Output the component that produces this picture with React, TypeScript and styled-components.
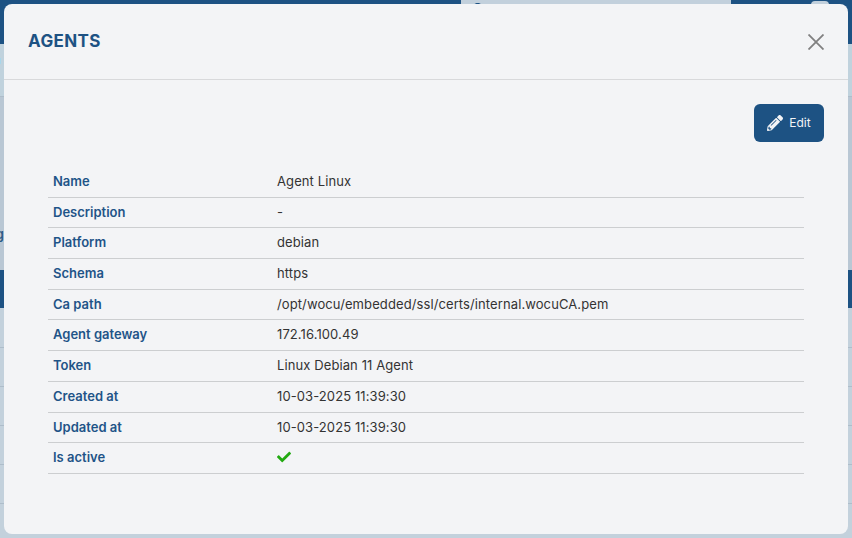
import styled, { createGlobalStyle } from "styled-components";
import { FaCheck, FaPencilAlt, FaSearch } from "react-icons/fa";

const blue = "#1d5283";

const GlobalStyle = createGlobalStyle`
  html, body {
    margin: 0;
    padding: 0;
    height: 100%;
    overflow: hidden;
    background: #c3d1dc;
    font-family: Inter, "Liberation Sans", sans-serif;
  }
`;

const Page = styled.div`
  height: 538px;
  overflow: hidden;
`;

const TopBar = styled.header`
  height: 44px;
  background: ${blue};
  display: flex;
`;

const Search = styled.div`
  width: 270px;
  height: 30px;
  box-sizing: border-box;
  margin-left: 461px;
  padding: 3px 0 0 11px;
  background: #c2d0dc;
  color: ${blue};
  font-size: 14px;
`;

const UserBox = styled.div`
  width: 18px;
  height: 30px;
  margin: 1px 0 0 80px;
  background: #c2d0dc;
  border-radius: 4px;
`;

const SubBar = styled.div`
  height: 52px;
  background: #c0d2dd;
  border-bottom: 1px solid #aebdca;
`;

const Marker = styled.div`
  width: 1px;
  height: 6px;
  position: relative;
  top: 14px;
  background: #a8d6ea;
`;

const Content = styled.div`
  height: 173px;
  background: #b9c7d4;
  display: flex;
  align-items: flex-start;
`;

const Clipped = styled.div`
  width: 4px;
  height: 20px;
  margin-top: 129px;
  overflow: hidden;
  display: flex;
  justify-content: flex-end;
  font-size: 13px;
  font-weight: 600;
  color: #2c5a85;
`;

const TableHead = styled.div`
  height: 38px;
  background: ${blue};
`;

const PageRows = styled.div`
  padding-top: 1px;
`;

const PageRow = styled.div`
  height: 38px;
  border-bottom: 1px solid #aebdca;
`;

const Modal = styled.section`
  position: fixed;
  top: 4px;
  left: 4px;
  right: 4px;
  bottom: 4px;
  background: #f3f4f6;
  border-radius: 8px;
  display: flex;
  flex-direction: column;
`;

const ModalHeader = styled.div`
  height: 76px;
  box-sizing: border-box;
  border-bottom: 1px solid #d8d9db;
  padding: 0 24px;
  display: flex;
  align-items: center;
  justify-content: space-between;
`;

const Title = styled.h2`
  margin: 0 0 2px;
  font-size: 17px;
  font-weight: 700;
  letter-spacing: 0.4px;
  color: ${blue};
`;

const CloseButton = styled.button`
  width: 16px;
  height: 16px;
  padding: 0;
  border: none;
  background: none;
  display: flex;
`;

const ModalBody = styled.div`
  padding: 24px 24px 0 44px;
`;

const Actions = styled.div`
  display: flex;
  justify-content: flex-end;
  margin-bottom: 24px;
`;

const EditButton = styled.button`
  width: 70px;
  height: 38px;
  border: none;
  border-radius: 6px;
  background: ${blue};
  color: #f3f4f6;
  font-family: inherit;
  font-size: 12px;
  display: flex;
  align-items: center;
  justify-content: center;
  gap: 6px;
  padding: 0 0 1px;

  svg {
    font-size: 16px;
  }
`;

const Table = styled.table`
  width: 756px;
  border-collapse: collapse;
  table-layout: fixed;
  font-size: 13px;
`;

const Row = styled.tr`
  height: 31px;
  border-bottom: 1px solid #ccced0;

  &:nth-child(2),
  &:nth-child(5),
  &:nth-child(9) {
    height: 30px;
  }
`;

const Label = styled.th`
  width: 219px;
  padding: 0 5px 1px;
  text-align: left;
  font-weight: 600;
  color: #1f5488;
`;

const Value = styled.td`
  padding: 0 0 1px;
  color: #333;
  letter-spacing: 0.1px;
`;

const ActiveIcon = styled(FaCheck)`
  display: block;
  font-size: 14px;
  color: #22aa11;
`;

const rows = [
  ["Name", "Agent Linux"],
  ["Description", "-"],
  ["Platform", "debian"],
  ["Schema", "https"],
  ["Ca path", "/opt/wocu/embedded/ssl/certs/internal.wocuCA.pem"],
  ["Agent gateway", "172.16.100.49"],
  ["Token", "Linux Debian 11 Agent"],
  ["Created at", "10-03-2025 11:39:30"],
  ["Updated at", "10-03-2025 11:39:30"],
];

const App = () => {
  return (
    <>
      <GlobalStyle />
      <Page>
        <TopBar>
          <Search>
            <FaSearch />
          </Search>
          <UserBox />
        </TopBar>
        <SubBar>
          <Marker />
        </SubBar>
        <Content>
          <Clipped>Monitoring</Clipped>
        </Content>
        <TableHead />
        <PageRows>
          <PageRow />
          <PageRow />
          <PageRow />
          <PageRow />
          <PageRow />
        </PageRows>
      </Page>
      <Modal>
        <ModalHeader>
          <Title>AGENTS</Title>
          <CloseButton aria-label="Close">
            <svg width="16" height="16" viewBox="0 0 16 16">
              <path d="M0.5 0.5 15.5 15.5M15.5 0.5 0.5 15.5" stroke="#808080" strokeWidth="1.8" />
            </svg>
          </CloseButton>
        </ModalHeader>
        <ModalBody>
          <Actions>
            <EditButton>
              <FaPencilAlt />
              Edit
            </EditButton>
          </Actions>
          <Table>
            <tbody>
              {rows.map(([name, value]) => (
                <Row key={name}>
                  <Label>{name}</Label>
                  <Value>{value}</Value>
                </Row>
              ))}
              <Row>
                <Label>Is active</Label>
                <Value>
                  <ActiveIcon />
                </Value>
              </Row>
            </tbody>
          </Table>
        </ModalBody>
      </Modal>
    </>
  );
};

export default App;
